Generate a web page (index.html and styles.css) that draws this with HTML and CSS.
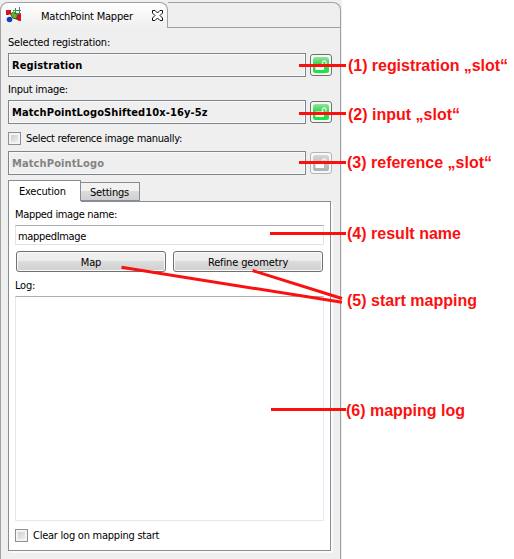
FILE: index.html
```html
<!DOCTYPE html>
<html lang="en">
<head>
<meta charset="utf-8">
<title>MatchPoint Mapper</title>
<link rel="stylesheet" href="styles.css">
</head>
<body>
<svg class="defs" width="0" height="0" aria-hidden="true">
  <defs>
    <linearGradient id="green" x1="0" y1="0" x2="0" y2="1"><stop offset="0" stop-color="#8fe69b"/><stop offset=".4" stop-color="#43d655"/><stop offset="1" stop-color="#14e83a"/></linearGradient>
    <linearGradient id="gray" x1="0" y1="0" x2="0" y2="1"><stop offset="0" stop-color="#d6d6d6"/><stop offset="1" stop-color="#b0b0b0"/></linearGradient>
    <symbol id="lock" viewBox="0 0 18 18">
      <rect x="1" y="1" width="16" height="16" rx="2.5"/>
      <rect x="3.500" y="8.5" width="8.500" height="5.500" rx=".6" fill="#fff"/>
      <path d="M10.500 9V6.500Q10.500 5 12.300 5T14 6.500V8.500" fill="none" stroke="#fff" stroke-opacity=".85" stroke-width="1.300"/>
    </symbol>
  </defs>
</svg>
<main class="view">
  <header class="view-bar">
    <div class="view-tab">
      <svg class="logo" width="17" height="17" viewBox="0 0 17 17">
        <path d="M0 3h5v4l-3 1H0zM10 8l5-2v8h-2l-5-3z" fill="#d3121d"/>
        <path d="M7 3.500h8M6 6.500h8M9.500 1v6M13.500 0v6" stroke="#2c9568" fill="none"/>
        <path d="M4.500 7l3-2 4 3-1 4-4-1z" fill="#6fae22" stroke="#26490f" stroke-width=".8"/>
        <circle cx="3.500" cy="12.500" r="2.800" fill="#123fc0"/>
      </svg>
      <span class="view-title">MatchPoint Mapper</span>
      <svg class="close" width="11" height="11" viewBox="0 0 11 11"><path d="M.5.5h2.500l2.500 2.500 2.500-2.500h2.500V3L8 5.500 10.500 8v2.500H8L5.500 8 3 10.500H.5V8L3 5.500.5 3z" fill="#fff" stroke="#111"/></svg>
    </div>
    <div class="view-rest"></div>
  </header>
  <section class="body">
    <div class="label"><span>Selected registration:</span></div>
    <div class="row"><div class="slot"><span>Registration</span></div><button class="lock"><svg width="18" height="18" fill="url(#green)"><use href="#lock"/></svg></button></div>
    <div class="label second"><span>Input image:</span></div>
    <div class="row"><div class="slot"><span>MatchPointLogoShifted10x-16y-5z</span></div><button class="lock"><svg width="18" height="18" fill="url(#green)"><use href="#lock"/></svg></button></div>
    <div class="check manual"><i class="box"></i><span>Select reference image manually:</span></div>
    <div class="row"><div class="slot off"><span>MatchPointLogo</span></div><button class="lock off"><svg width="18" height="18" fill="url(#gray)"><use href="#lock"/></svg></button></div>
    <nav class="tabs"><div class="tab active"><span>Execution</span></div><div class="tab"><span>Settings</span></div></nav>
    <div class="pane">
      <div class="label name"><span>Mapped image name:</span></div>
      <div class="input"><span>mappedImage</span></div>
      <div class="buttons"><button class="btn">Map</button><button class="btn">Refine geometry</button></div>
      <div class="label"><span>Log:</span></div>
      <div class="log"></div>
      <div class="check clear"><i class="box"></i><span>Clear log on mapping start</span></div>
    </div>
  </section>
</main>
<svg class="callouts" width="514" height="559" viewBox="0 0 514 559">
  <path d="M299 65.500H346M299 113.500H346M299 162.500H346M270 233.500H346M271 409.500H346M121.500 267.300L342 302.300M252.500 270.500L342 298.500"/>
  <text x="348" y="71" textLength="160">(1) registration „slot“</text>
  <text x="348" y="120" textLength="112">(2) input „slot“</text>
  <text x="347" y="168" textLength="145">(3) reference „slot“</text>
  <text x="347" y="239" textLength="114">(4) result name</text>
  <text x="347" y="306" textLength="130">(5) start mapping</text>
  <text x="346" y="416" textLength="119">(6) mapping log</text>
</svg>
</body>
</html>
```
FILE: styles.css
```css
* { box-sizing: border-box; }
body {
  margin: 0;
  width: 514px;
  height: 559px;
  overflow: hidden;
  position: relative;
  background: #fff;
  color: #000;
  font: 11px/16px "DejaVu Sans Condensed", "DejaVu Sans", sans-serif;
  font-stretch: condensed;
  letter-spacing: -.2px;
}
.defs { position: absolute; }
span { white-space: nowrap; }
.view {
  width: 342px;
  height: 559px;
  padding-top: 2px;
  background: #efefef;
}
.view-bar { display: flex; height: 26px; width: 341px; }
.view-tab {
  display: flex;
  align-items: center;
  width: 168px;
  padding-left: 5px;
  border: 1px solid #a0a0a0;
  border-bottom: 0;
  border-radius: 8px 8px 0 0;
  background: linear-gradient(#fff, #efefef);
}
.view-title { margin-left: 18px; width: 93px; margin-right: 18px; padding-top: 2px; }
.view-rest {
  flex: 1;
  border: 1px solid #a0a0a0;
  border-left: 0;
  border-radius: 0 8px 0 0;
}
.body {
  width: 341px;
  height: 531px;
  padding: 7px 8px 0 7px;
  border: solid #a0a0a0;
  border-width: 0 1px;
}
.label { height: 14px; margin-bottom: 4px; }
.second { margin-top: 5px; letter-spacing: -.25px; }
.row { display: flex; height: 24px; gap: 4px; }
.slot {
  width: 298px;
  padding: 4px 3px;
  border: 1px solid #7f8590;
  box-shadow: inset 0 0 0 1px #f9f9f9;
  font-weight: bold;
  letter-spacing: .12px;
}
.slot.off { color: #838383; }
.lock {
  width: 22px;
  height: 22px;
  margin-top: 1px;
  padding: 1px;
  border: 1px solid #707070;
  border-radius: 3px;
  background: #f7f7f7;
}
.lock svg { display: block; }
.lock.off { border-color: #b2b6ba; }
.check { display: flex; align-items: center; height: 14px; gap: 5px; }
.check span { padding-top: 2px; }
.box {
  width: 13px;
  height: 13px;
  border: 1px solid #8e8f8f;
  background: linear-gradient(135deg, #c5c9ce, #f4f4f4);
  box-shadow: inset 0 0 0 2px #f4f4f4;
}
.manual { margin: 7px 0 6px; letter-spacing: -.32px; }
.tabs { display: flex; align-items: flex-end; height: 21px; margin-top: 5px; }
.tab {
  width: 60px;
  height: 19px;
  margin-left: -1px;
  padding: 2px 0 0 9px;
  border: 1px solid #898c95;
  background: linear-gradient(#f2f2f2 45%, #dcdcdc 50%, #d0d0d0);
}
.tab.active {
  width: 73px;
  height: 21px;
  margin: 0;
  padding: 3px 0 0 10px;
  border-bottom: 0;
  background: #fff;
}
.pane {
  width: 323px;
  height: 350px;
  padding: 6px 6px 0;
  border: 1px solid #898c95;
  border-top: 0;
  background: linear-gradient(#898c95, #898c95) 72px 0 / 251px 1px no-repeat #fff;
  box-shadow: 2px 2px 0 #fbfbfb;
}
.name, .input { letter-spacing: -.33px; }
.input {
  height: 20px;
  padding: 3px 2px;
  border: 1px solid #e2e3ea;
  border-top-color: #abadb3;
  border-radius: 1px;
}
.buttons { display: flex; gap: 7px; margin: 6px 1px; }
.btn {
  width: 150px;
  height: 21px;
  padding: 2px 0 0;
  font: inherit;
  letter-spacing: -.13px;
  color: #000;
  border: 1px solid #707070;
  border-radius: 3px;
  box-shadow: inset 0 0 0 1px #fafafa;
  background: linear-gradient(#f2f2f2, #ebebeb 48%, #dcdcdc 50%, #cfcfcf);
}
.log {
  height: 225px;
  border: 1px solid #e2e9ef;
  border-top-color: #abadb3;
}
.clear { margin-top: 7px; letter-spacing: -.24px; }
.callouts { position: absolute; left: 0; top: 0; letter-spacing: 0; }
.callouts path { fill: none; stroke: #fb1010; stroke-width: 3; }
.callouts text { font: bold 16px "Liberation Sans", sans-serif; fill: #fb1010; }
```
